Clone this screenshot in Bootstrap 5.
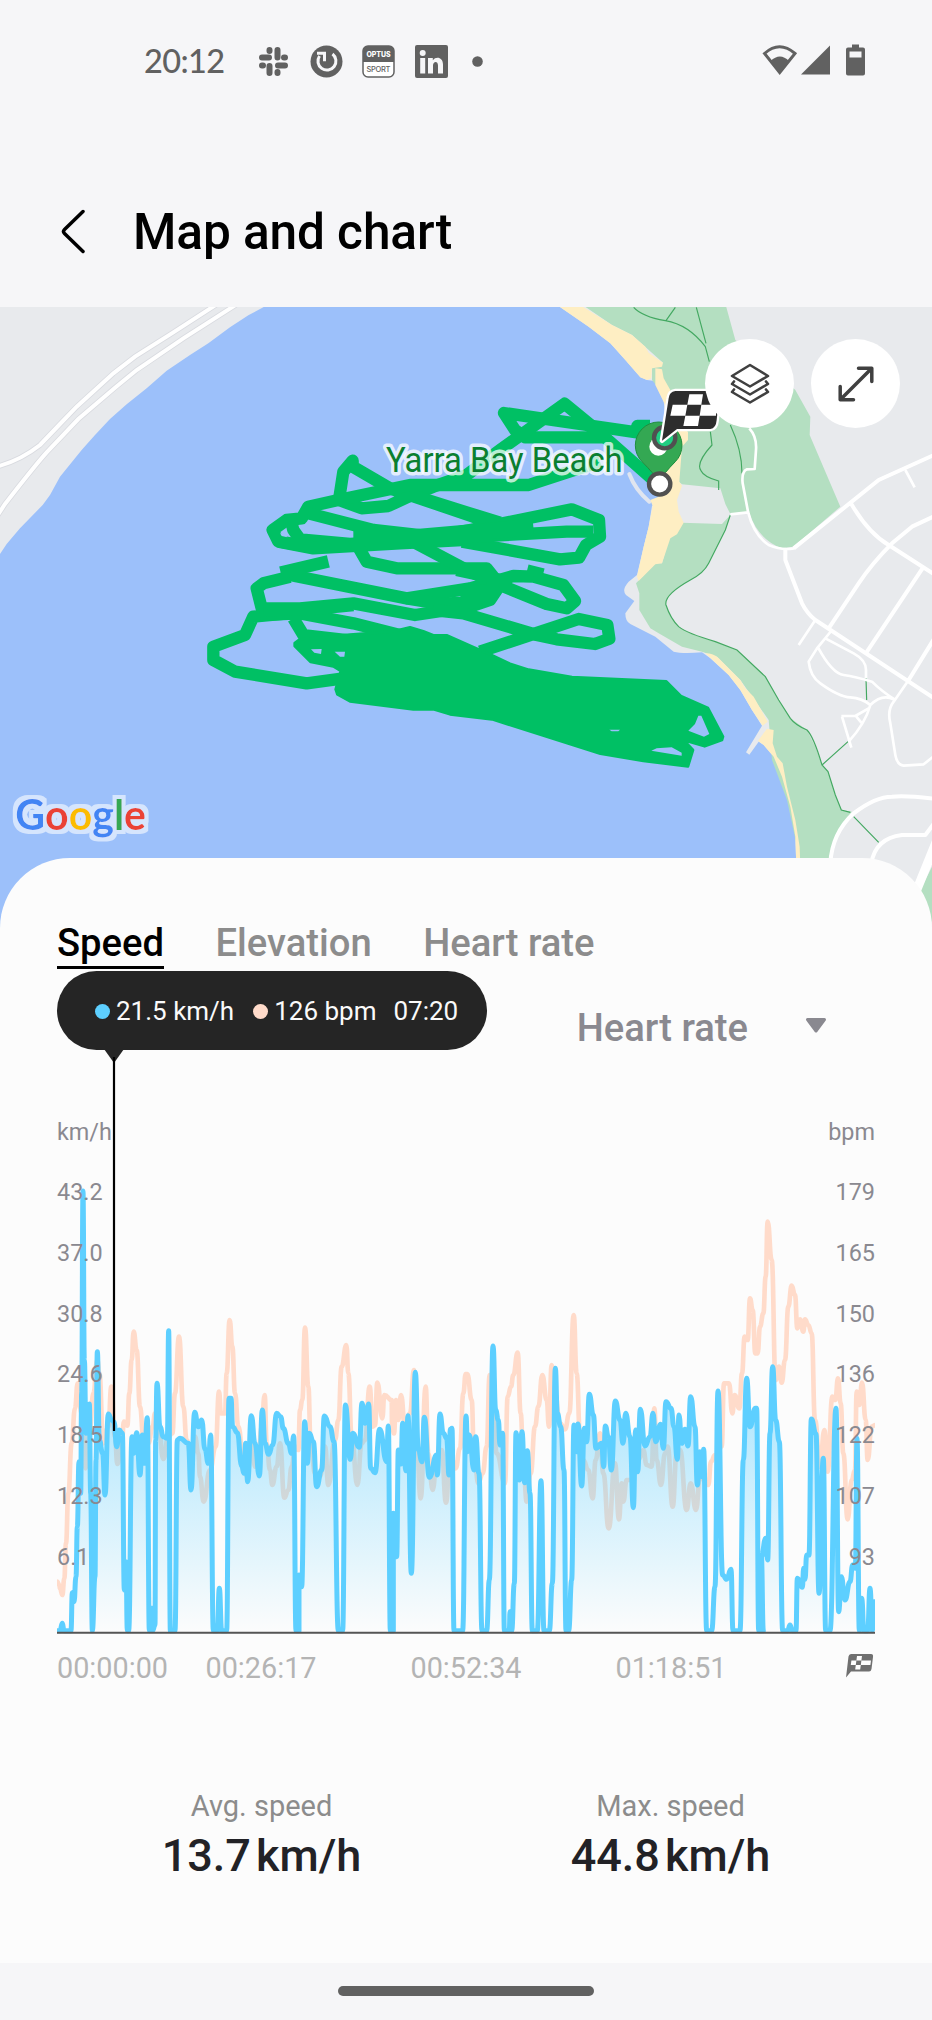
<!DOCTYPE html>
<html lang="en">
<head>
<meta charset="utf-8">
<meta name="viewport" content="width=device-width, initial-scale=1">
<title>Map and chart</title>
<link href="https://cdn.jsdelivr.net/npm/bootstrap@5.3.0/dist/css/bootstrap.min.css" rel="stylesheet">
<style>
body{background:#f6f6f8;font-family:Roboto,"Liberation Sans",sans-serif;color:#000;width:932px;overflow-x:hidden}
svg{display:block;flex:none}
.status-bar{height:122px;padding:0 66px 0 144px;color:#616161}
.clock{font-family:Lato,sans-serif;font-size:32.5px;font-weight:500;line-height:42px;width:81px;letter-spacing:-.6px;white-space:nowrap}
.status-icons{gap:19.6px;margin-left:32px}
.title-bar{height:185px;padding:34px 61px 0}
.page-title{font-size:49.6px;font-weight:500;line-height:60px;margin-left:44px;letter-spacing:-.1px;padding-top:1px}
.map-area{height:623px}
.map-tools{top:32px;right:32px;gap:17px}
.round-tool{width:89px;height:89px;padding:0;background:#fff}
.sheet{margin-top:-72px;height:1105px;border-radius:70px 70px 0 0;background:#fcfcfc;padding:61px 57px 0;z-index:1}
.metric-tabs{gap:51.5px;height:52px;font-size:38.2px;font-weight:500;line-height:48px}
.metric-tabs a{color:#8c8c8c;text-decoration:none}
.metric-tabs a.active{color:#000;border-bottom:3px solid #000;height:50px}
.metric-picker{height:120px;padding:34px 48px 0 0;font-size:38.2px;font-weight:500;line-height:46px;color:#8a8990}
.unit-row,.axis-col{font-size:23.4px;line-height:28px;color:#8a8990}
.unit-row{height:70px;padding-top:27px}
.plot{height:473px}
.axis-col{padding-top:1px}
.axis-col span{height:60.8px;line-height:60px;display:block}
.time-row{height:55px;padding-top:14px;font-size:28.8px;line-height:40px;color:#b4b4b4}
.tip{left:57px;top:113px;width:430px;height:79px;border-radius:39.5px;background:#252525;color:#fafafa;font-size:26px;line-height:32px;padding:1px 0 0 38px;white-space:nowrap}
.tip .dot{width:15px;height:15px;border-radius:50%;margin-right:6px}
.cursor{left:104px;top:191px}
.stats{margin-top:100px;font-size:29px;line-height:34px;color:#8c8c8c}
.stats strong{display:block;color:#222226;font-size:45px;font-weight:500;line-height:52px;margin-top:7px;word-spacing:-6px}
.nav-hint{height:57px;padding-top:23px}
.nav-hint div{width:256px;height:10px;border-radius:5px;background:#616161}
</style>
</head>
<body>
<div class="status-bar d-flex align-items-center justify-content-between">
  <div class="d-flex align-items-center">
    <span class="clock">20:12</span>
    <div class="status-icons d-flex align-items-center">
      <svg width="33" height="33" viewBox="0 0 33 33" stroke="#616161" stroke-width="6" stroke-linecap="round"><path d="M5 12.500H12M20.500 5V12.500M21 20.500H28M12.500 21V28"/><path d="M12.500 5V6M20.500 27V28M27 12.500h1M5 20.500h1"/></svg>
      <svg width="33" height="33" viewBox="0 0 33 33"><circle cx="16.500" cy="16.500" r="16" fill="#616161"/><path d="M22.500 9A9 9 0 1 1 9.500 11" fill="none" stroke="#f6f6f8" stroke-width="3"/><path d="M7 8.200h7.500v8" fill="none" stroke="#f6f6f8" stroke-width="3"/></svg>
      <svg width="33" height="33" viewBox="0 0 33 33"><rect x="1" y="1" width="31" height="31" rx="5" fill="#fff" stroke="#616161" stroke-width="1.500"/><path d="M1 17V6q0-5 5-5h21q5 0 5 5v11z" fill="#616161"/><g font-family="Inter" text-anchor="middle"><text x="16.500" y="12" font-size="7" font-weight="800" fill="#fff" textLength="24">OPTUS</text><text x="16.500" y="26.500" font-size="7.500" font-weight="500" fill="#616161" textLength="24">SPORT</text></g></svg>
      <svg width="33" height="33" viewBox="0 0 33 33"><rect width="33" height="33" rx="2" fill="#616161"/><g fill="#f6f6f8"><circle cx="7.700" cy="8" r="3"/><path d="M5.200 13H10.200V28.500H5.200zM13 13H17.800V15.200C21 11 28 12 28 19.500V28.500H23V20.500C23 15.500 18 16 18 20.500V28.500H13z"/></g></svg>
      <svg width="33" height="33" viewBox="0 0 33 33"><circle cx="10.500" cy="16.500" r="5.300" fill="#616161"/></svg>
    </div>
  </div>
  <svg width="104" height="34" viewBox="0 0 104 34" fill="#616161"><path d="M2.500 9.500Q17.500-4 33 9.500L17.700 28.500Z" fill="none" stroke="#616161" stroke-width="3"/><path d="M8.500 17Q18 8 27 17L17.700 29Z"/><path d="M39 30.500 68 1.500V30.500Z"/><path d="M90 .5h7v3h4q2 0 2 2v24q0 2-2 2H86q-2 0-2-2v-24q0-2 2-2h4zM87.500 7.500v6h12v-6z" fill-rule="evenodd"/></svg>
</div>
<header class="title-bar d-flex align-items-center">
  <svg width="28" height="46" viewBox="0 0 28 46" fill="none" stroke="#000" stroke-width="3.500" stroke-linecap="round" stroke-linejoin="round"><path d="M22 2.500 3.500 20.500Q1.500 22.500 3.500 24.500L22 42.500"/></svg>
  <h1 class="page-title mb-0">Map and chart</h1>
</header>
<section class="map-area position-relative overflow-hidden">
  <svg width="932" height="623" viewBox="0 21 2796 1869">
    <defs><filter id="halo" x="-10%" y="-20%" width="120%" height="140%"><feMorphology in="SourceAlpha" operator="dilate" radius="12" result="fat"/><feGaussianBlur in="fat" stdDeviation="1.500" result="soft"/><feFlood flood-color="#fff" flood-opacity=".58"/><feComposite in2="soft" operator="in" result="ring"/><feMerge><feMergeNode in="ring"/><feMergeNode in="SourceGraphic"/></feMerge></filter></defs>
    <rect width="2796" height="1900" fill="#9cc0fa"/>
    <path fill="#e8eaed" d="M0 0H830L745 46 690 82 625 130 570 165 500 212 440 265 380 313 330 357 285 405 245 450 180 530 150 585 128 615 60 685 20 732 0 762Z"/>
    <path fill="none" stroke="#d9dbe0" stroke-width="17" d="M670 0 520 97 405 170 340 220 230 320 180 372 120 435Q60 482-10 500M730 0 550 115 410 210 345 263 235 357 140 457Q100 502 15 612L-10 650"/>
    <path fill="none" stroke="#fff" stroke-width="12" d="M670 0 520 97 405 170 340 220 230 320 180 372 120 435Q60 482-10 500M730 0 550 115 410 210 345 263 235 357 140 457Q100 502 15 612L-10 650"/>
    <g transform="translate(1386)">
      <path fill="#e8eaed" d="M270 0 295 22 380 80 445 130 490 180 535 232 555 240 578 243 605 300 612 400 600 590 570 618 560 680 545 740 525 825 500 845Q478 870 492 885L517 903 490 940Q490 965 505 972L580 1010 635 1055Q660 1062 720 1057L745 1075 800 1125 835 1170 870 1230 900 1277 852 1357 862 1364 890 1325 905 1335 935 1370 960 1430 985 1520 1000 1610 1003 1700V1890H1420V0Z"/>
      <path fill="none" stroke="#e0e5ef" stroke-width="12" stroke-linecap="round" d="M502 522Q520 570 562 605"/>
      <g fill="#b4dfc1">
        <path d="M340 0H787L820 120 1000 270 1045 350 1043 405 1135 620 995 740 960 745Q890 720 862 640L805 642 790 612 775 565 660 553 650 545 640 330 570 240 570 205 603 188 510 105 450 75Z"/>
        <path d="M600 790 625 700 660 668 780 672 805 645 790 690 740 790Q725 820 685 840 605 885 612 915 625 955 650 980 675 1000 760 1025L825 1050 910 1130 950 1200 985 1255 1035 1290 1060 1340 1080 1395 1098 1415 1120 1485 1138 1530 1170 1535Q1110 1600 1105 1720H1013L1005 1640 975 1500 930 1380 920 1260 835 1140 765 1070 720 1055 660 1040 590 1000 565 985 532 930V880L522 850 580 790Z"/>
        <path d="M1370 1780 1420 1680V1890Z"/>
      </g>
      <g fill="#feeec3">
        <path d="M270 0H330L365 22 450 75 510 105 550 140 560 158 603 188 600 200 570 205 568 235 555 240 535 232 490 180 445 130 380 80 295 22Z"/>
        <path d="M580 205 600 208 605 235 625 270 640 330 678 397 678 420 660 440 652 545 660 557 645 600 650 635 665 668 645 703 625 715 610 760 600 790 580 793 530 843 525 830 545 740 560 680 572 618 565 600 590 590 610 400 612 320 580 255Z"/>
        <path d="M730 1060Q755 1060 770 1075L835 1140 850 1165 875 1190 917 1265 902 1277 870 1230 835 1170 800 1125ZM915 1286 935 1290 932 1330 945 1370 962 1390 975 1460 1000 1560 1013 1640 1015 1700H1003L1000 1610 985 1520 960 1430 935 1370 905 1335 888 1322Z"/>
      </g>
      <path fill="none" stroke="#43a861" stroke-width="3.500" d="M515 22Q540 50 610 62T730 140L742 185M640 22 612 62M703 22 732 130M745 395 750 435Q700 490 717 512 725 530 770 543V570M805 375Q840 450 840 520M805 645 790 690 740 790Q725 820 685 840 605 885 612 915 625 955 650 980 675 1000 760 1025L825 1050 910 1130 950 1200 985 1255Q1000 1275 1035 1290 1055 1310 1080 1395L1098 1415 1120 1485 1138 1530 1165 1537M1175 1550 1250 1627M1080 1395 1158 1325M1212 1135 1214 1200"/>
      <g fill="none" stroke="#fff" stroke-width="8" stroke-linejoin="round">
        <path d="M862 385Q885 410 882 450L878 507 855 508Q838 515 842 550L858 635Q875 705 920 735 960 752 995 745L1250 540 1420 463M805 643 858 637M1110 990 1065 1045 1040 1085Q1045 1130 1075 1150 1130 1190 1165 1192T1225 1215M1090 1015 1175 1060Q1212 1080 1212 1110V1135M1068 1042Q1110 1120 1145 1125T1230 1145Q1260 1175 1300 1200M1225 1215Q1260 1180 1295 1198M1225 1215Q1210 1270 1160 1325M1138 1248H1180L1220 1225M1140 1250 1168 1343M1183 1250 1200 1270M1060 960 1010 1035M1330 510 1358 562M1340 1140 1295 1205Q1275 1230 1285 1270L1300 1365Q1305 1395 1325 1397L1385 1393 1420 1365"/>
        <path stroke-width="12" d="M970 745V780L1020 910Q1035 940 1060 960L1420 1197M995 745 1250 540 1420 463M1168 612Q1220 700 1280 735L1420 825M1420 647 1350 680 1290 730Q1230 790 1190 850L1100 985M1385 800 1215 1055M1420 1010 1340 1140M1105 1690Q1110 1600 1175 1540 1240 1490 1290 1490 1330 1485 1420 1497M1228 1690Q1240 1615 1320 1605H1390L1420 1565"/>
        <path stroke-width="27" d="M1360 1780 1425 1620"/>
      </g>
    </g>
    <g fill="none" stroke="#00c064" stroke-width="37" stroke-linejoin="round">
      <path d="M1950 378 1912 378 1915 398 1780 378 1512 339 1545 390 1575 412 1810 412"/>
      <path d="M1960 540 1790 390 1694 311 1500 450 1400 525 1300 560 1225 590 1165 618 1085 625 1017 600 1030 515 1058 482V500L1170 565 1420 650 1500 680"/>
      <path d="M1800 485 1586 555H1230L1015 600 925 620 905 655 860 660 818 690 835 725 940 745 1200 730 1386 720"/>
      <path d="M925 640 1120 690 1300 710 1410 690 1715 628 1797 660 1800 710 1758 735 1737 773 1680 778 1386 725"/>
      <path d="M870 650 880 690 900 718 1050 732 1386 712 1700 695 1780 695"/>
      <path d="M840 725 940 742 1180 728"/>
      <path d="M1250 590 1400 637 1500 668"/>
      <path d="M1060 715 1100 785 1190 805H1460L1500 855 1470 900 1410 920 1245 945 1060 910 900 925H785L770 865 790 850 870 830"/>
      <path d="M1230 720 1400 810 1500 855 1640 912 1700 925 1725 903 1690 855 1600 830 1540 828 1410 865 1220 895 870 825"/>
      <path d="M842 818 985 784" stroke-width="38"/>
      <path d="M1370 810 1440 825 1500 840M1380 880 1480 868 1400 918M1220 895 1320 912 1440 905"/>
      <path d="M1582 808 1630 820" stroke-width="30"/>
      <path d="M920 935 760 950 735 1005 640 1040V1080L705 1115 920 1150 1030 1135"/>
      <path d="M780 945 900 940 1060 970 1220 1010M880 955 910 1005 1080 1025M1300 930 1390 940 1610 1005 1670 1018 1785 1032 1828 1016 1822 975 1736 957 1606 1000 1440 1055"/>
      <path d="M790 930 930 928 1060 915"/>
      <path d="M1060 712 1250 712 1500 690 1600 680" stroke-width="50"/>
    </g>
    <path fill="#00c064" stroke="#00c064" stroke-width="8" stroke-linejoin="round" d="M884 1029 898 1019 1050 1004 1180 994 1230 982 1270 994 1300 1006H1340L1421 1042 1476 1066 1530 1091 1586 1109 1716 1131 1999 1144 2044 1189 2124 1224 2169 1310 2166 1320 2114 1339 2052 1321 2079 1350 2064 1399 1930 1383 1801 1361 1476 1258 1350 1243 1300 1228H1240L1050 1204 1012 1183 1007 1168 1022 1113 1000 1099 932 1086 884 1038Z"/>
    <path fill="#9cc0fa" d="M2095 1247 2104 1247 2128 1302 2112 1310 2065 1292 2085 1272ZM1954 1352 1970 1345 2015 1342 2045 1358V1367ZM933 1048 965 1047 963 1062 943 1058ZM1004 1055 1035 1055 1033 1070 1020 1070ZM1828 1289H1860L1855 1294 1835 1294ZM840 700 855 702 862 712 845 708Z"/>
    <g transform="translate(1386)">
      <path fill="#34a853" stroke="#1e8e3e" stroke-width="3" d="M592 545Q575 520 540 485A70 70 0 1 1 640 485Q605 520 592 545Z"/>
      <circle cx="589" cy="440" r="27" fill="#fff"/>
      <circle cx="593" cy="552" r="32" fill="#fff" stroke="#505050" stroke-width="13"/>
      <circle cx="608" cy="413" r="32" fill="#20ce82" stroke="#505050" stroke-width="13"/>
      <path d="M640 273H765Q772 300 764 360 762 385 745 387H645L600 422 620 295Q622 275 640 273Z" fill="#2d2d2d" stroke="#fff" stroke-width="14" stroke-linejoin="round"/>
      <path d="M640 273H765Q772 300 764 360 762 385 745 387H645L600 422 620 295Q622 275 640 273Z" fill="#2d2d2d"/>
      <path fill="#fff" d="M682 283H723L718 314H676ZM632 314H676L670 347H625ZM718 314H762V347H713ZM670 347H713L708 378H664Z"/>
    </g>
    <text x="1158" y="515" font-family="Roboto" font-size="103" fill="#0a7f30" stroke="#fff" stroke-opacity=".72" stroke-width="21" stroke-linejoin="round" paint-order="stroke" textLength="710" lengthAdjust="spacingAndGlyphs">Yarra Bay Beach</text>
    <text x="46" y="1589" font-family="Lato" font-size="127" font-weight="700" textLength="392" lengthAdjust="spacingAndGlyphs" fill="#4285f4" filter="url(#halo)">G<tspan fill="#ea4335">o</tspan><tspan fill="#fbbc05">o</tspan>g<tspan fill="#34a853">l</tspan><tspan fill="#ea4335">e</tspan></text>
  </svg>
  <div class="map-tools position-absolute d-flex">
    <button class="btn round-tool rounded-circle d-flex align-items-center justify-content-center border-0" aria-label="Layers"><svg width="40" height="42" viewBox="0 0 40 42" fill="none" stroke="#404040" stroke-width="2.600" stroke-linejoin="round" stroke-linecap="round"><path d="M20 2 38 13 20 23.500 2 13ZM4 18.500 2 21 20 31.500 38 21 36 18.500M4 26.500 2 29 20 39.500 38 29 36 26.500"/></svg></button>
    <button class="btn round-tool rounded-circle d-flex align-items-center justify-content-center border-0" aria-label="Expand"><svg width="36" height="36" viewBox="0 0 36 36" fill="none" stroke="#404040" stroke-width="3.500" stroke-linecap="round" stroke-linejoin="round"><path d="M2.500 33.500 33.500 2.500M20.500 2.200H33.800V15.500M2.200 20.500V33.800H15.500"/></svg></button>
  </div>
</section>
<main class="sheet position-relative">
  <nav class="metric-tabs d-flex"><a class="active" href="#">Speed</a><a href="#">Elevation</a><a href="#">Heart rate</a></nav>
  <div class="metric-picker d-flex justify-content-end">Heart rate <svg width="22" height="18" viewBox="0 0 22 18" style="margin:12px 0 0 57px"><path d="M2.500 2.500H19.500L11 14Z" fill="#8a8990" stroke="#8a8990" stroke-width="3" stroke-linejoin="round"/></svg></div>
  <div class="unit-row d-flex justify-content-between"><span>km/h</span><span>bpm</span></div>
  <div class="plot position-relative">
    <svg class="position-absolute top-0 start-0" width="818" height="473" viewBox="51 3 2454 1419">
      <defs><linearGradient id="area" gradientUnits="userSpaceOnUse" x1="0" y1="600" x2="0" y2="1418"><stop stop-color="#5dcfff" stop-opacity=".56"/><stop offset="1" stop-color="#5dcfff" stop-opacity="0"/></linearGradient></defs>
      <g fill="none" stroke-width="14" stroke-linejoin="round" stroke-linecap="round">
        <path id="hr" stroke="#ffdbca"/>
        <path id="fillArea" fill="url(#area)" stroke="none"/>
        <path id="speed" stroke="#5dcfff" stroke-width="15"/>
      </g>
      <path d="M51 1418H2505" stroke="#555" stroke-width="6"/>
    </svg>
    <div class="position-relative d-flex justify-content-between">
      <div class="axis-col"><span>43.2</span><span>37.0</span><span>30.8</span><span>24.6</span><span>18.5</span><span>12.3</span><span>6.1</span></div>
      <div class="axis-col text-end"><span>179</span><span>165</span><span>150</span><span>136</span><span>122</span><span>107</span><span>93</span></div>
    </div>
  </div>
  <div class="time-row d-flex"><span style="width:148.500px">00:00:00</span><span style="width:205px">00:26:17</span><span style="width:205px">00:52:34</span><span>01:18:51</span>
    <svg class="ms-auto" width="30" height="26" viewBox="0 0 30 26" style="margin-top:5px"><path d="M6 1H26Q28.500 1 28 4L26.500 16Q26 18.500 24 18.500H6L1 24.500 3.500 3.500Q4 1 6 1Z" fill="#707070"/><path fill="#fff" d="M12 3H17L16.400 7.500H11.400ZM6.400 7.500H11.400L10.800 12H5.800ZM16.400 7.500H21.600L21 12H15.800ZM10.800 12H15.800L15.200 16.500H10.200ZM21.600 7.500H26L25.400 12H21Z"/></svg>
  </div>
  <div class="stats row g-0 text-center">
    <div class="col-6">Avg. speed<strong>13.7 km/h</strong></div>
    <div class="col-6">Max. speed<strong>44.8 km/h</strong></div>
  </div>
  <div class="tip position-absolute d-flex align-items-center"><span class="dot" style="background:#5dcfff"></span><span>21.5 km/h</span><span class="dot" style="background:#ffdbca;margin-left:19px"></span><span>126 bpm</span><span style="margin-left:17px">07:20</span></div>
  <svg class="cursor position-absolute" width="20" height="384" viewBox="0 0 20 384"><path d="M0 0H20L10 14Z" fill="#252525"/><path d="M10 8V382" stroke="#000" stroke-width="2.200"/></svg>
</main>
<footer class="nav-hint"><div class="mx-auto"></div></footer>
<script src="https://cdn.jsdelivr.net/npm/bootstrap@5.3.0/dist/js/bootstrap.bundle.min.js"></script>
<script>
const heart = "51,1265 58,1275 60,1285 67,1305 73,1255 78,1150 85,1000 95,850 105,745 113,670 125,760 137,925 150,800 160,700 172,600 178,640 190,850 205,800 214,680 225,830 232,912 245,850 252,785 262,797 268,700 275,600 281,515 290,570 300,740 310,830 325,850 338,800 345,760 355,790 370,897 385,830 397,820 405,700 417,530 430,740 440,840 455,900 465,830 475,880 480,950 491,1025 510,930 527,860 537,695 543,760 555,760 560,640 569,480 577,560 585,700 595,800 610,900 622,950 635,830 645,920 655,900 665,800 674,705 680,850 690,930 697,975 710,920 720,850 733,1013 745,990 755,920 765,860 775,870 780,750 787,720 795,503 805,680 812,850 825,940 840,950 855,860 865,975 885,840 895,780 905,620 919,555 925,640 935,830 952,975 965,850 975,840 989,680 998,800 1005,795 1012,668 1027,775 1033,705 1055,720 1056,790 1062,820 1068,720 1075,780 1083,705 1095,800 1110,760 1122,630 1130,850 1142,1015 1157,680 1165,880 1178,990 1190,900 1205,870 1218,1028 1230,880 1247,925 1260,865 1270,700 1277,642 1282,642 1295,720 1302,880 1315,970 1328,940 1340,860 1349,645 1360,760 1370,880 1395,970 1403,710 1413,680 1420,645 1433,578 1442,760 1450,900 1460,1025 1472,940 1485,800 1495,740 1507,645 1520,720 1527,800 1535,615 1545,700 1560,790 1575,808 1588,760 1601,465 1610,640 1620,820 1630,900 1645,930 1658,1015 1667,900 1680,820 1690,940 1706,1105 1725,910 1737,1078 1745,970 1750,1025 1760,960 1775,960 1785,940 1795,900 1810,870 1820,915 1835,920 1843,745 1850,900 1863,975 1875,880 1883,860 1898,1040 1910,880 1920,870 1940,1050 1952,970 1968,1050 1980,950 2005,975 2013,905 2025,885 2045,860 2052,670 2067,670 2077,760 2084,705 2098,745 2106,640 2114,530 2123,540 2130,415 2138,450 2146,580 2153,580 2160,500 2170,460 2177,350 2183,185 2195,300 2207,660 2217,620 2225,668 2235,600 2245,440 2255,377 2265,405 2272,505 2280,478 2290,515 2295,478 2305,495 2315,520 2325,780 2340,920 2353,810 2363,935 2377,710 2386,720 2394,655 2402,730 2410,880 2423,1078 2435,960 2445,930 2450,695 2458,735 2466,668 2477,780 2483,900 2495,800 2505,795";
const pace = "51,1412 60,1412 67,1390 72,1412 93,1412 97,1298 102,1325 108,1250 112,1100 117,905 122,1000 125,700 129,93 133,600 138,820 148,732 152,1000 157,1412 165,1250 168,900 172,575 178,840 188,880 195,1005 205,762 215,780 222,785 230,860 238,810 247,820 253,1290 258,1205 262,1412 266,1412 276,830 282,880 290,818 300,945 307,825 313,910 322,773 328,1412 336,1345 338,1412 345,1395 347,840 351,670 360,800 370,830 382,835 386,512 391,1412 405,1412 412,840 420,835 445,850 453,990 464,757 475,800 485,780 495,868 505,910 512,825 520,1412 532,1412 538,1285 545,1412 560,1412 567,715 573,715 578,800 592,818 605,918 612,940 617,850 623,965 634,767 645,850 658,948 667,750 675,850 686,883 698,855 710,760 722,770 730,805 745,850 755,880 761,828 768,1412 777,1412 777,1245 785,1280 794,785 802,910 808,820 820,845 830,980 845,930 853,768 870,800 882,845 895,1412 908,1412 916,735 931,898 938,820 958,862 966,730 975,790 986,732 992,925 1005,938 1019,808 1040,905 1045,798 1051,1412 1060,1412 1060,1060 1070,1190 1075,870 1083,912 1088,790 1098,932 1104,767 1114,1240 1126,637 1135,870 1146,905 1153,772 1168,952 1190,885 1192,945 1200,762 1210,820 1220,835 1227,945 1231,808 1236,805 1242,1412 1268,1412 1278,768 1283,875 1288,825 1302,930 1307,830 1317,940 1326,1412 1340,1412 1348,1260 1359,558 1367,750 1375,780 1380,855 1388,820 1393,1412 1408,1412 1410,1355 1415,1412 1423,1270 1428,818 1438,960 1446,815 1454,968 1462,872 1470,1000 1477,1412 1492,1412 1503,962 1512,1412 1528,1412 1537,1270 1546,625 1552,760 1562,800 1572,930 1578,1412 1586,1412 1595,1260 1602,795 1610,875 1614,792 1625,978 1633,805 1640,845 1648,703 1660,765 1668,865 1685,850 1691,920 1696,798 1705,830 1714,930 1726,723 1740,780 1749,850 1757,760 1770,830 1780,1043 1787,810 1793,935 1801,748 1815,858 1830,830 1839,760 1847,845 1862,793 1870,865 1878,725 1893,745 1902,800 1912,898 1917,765 1925,850 1935,808 1944,858 1952,710 1965,800 1972,975 1980,875 1986,950 1991,868 2000,1412 2015,1412 2025,1280 2034,693 2048,1245 2060,1258 2073,1228 2079,1412 2100,1412 2110,900 2120,655 2130,800 2146,745 2150,745 2156,1412 2170,1412 2164,1190 2177,1135 2183,1200 2190,820 2198,620 2207,780 2218,845 2228,1412 2243,1412 2250,1395 2257,1412 2268,1412 2272,1255 2287,1282 2291,1225 2295,1258 2300,1185 2307,1185 2314,777 2328,822 2337,1300 2350,895 2357,1412 2370,1412 2388,745 2396,1355 2404,1250 2415,1320 2430,1265 2438,1215 2446,1225 2451,835 2458,1412 2465,1315 2472,1412 2483,1412 2490,1285 2497,1412 2502,1325";
// Horizontal-tangent bezier between neighbouring samples
function curve(list) {
  const pts = list.split(' ').map(p => p.split(',').map(Number));
  return pts.reduce((d, [x, y], i) => {
    if (!i) return `M${x} ${y}`;
    const [px, py] = pts[i - 1], mx = (px + x) / 2;
    return `${d}C${mx} ${py} ${mx} ${y} ${x} ${y}`;
  }, '');
}
document.getElementById('hr').setAttribute('d', curve(heart));
document.getElementById('speed').setAttribute('d', curve(pace));
document.getElementById('fillArea').setAttribute('d', curve(pace) + 'V1418H51Z');
</script>
</body>
</html>
